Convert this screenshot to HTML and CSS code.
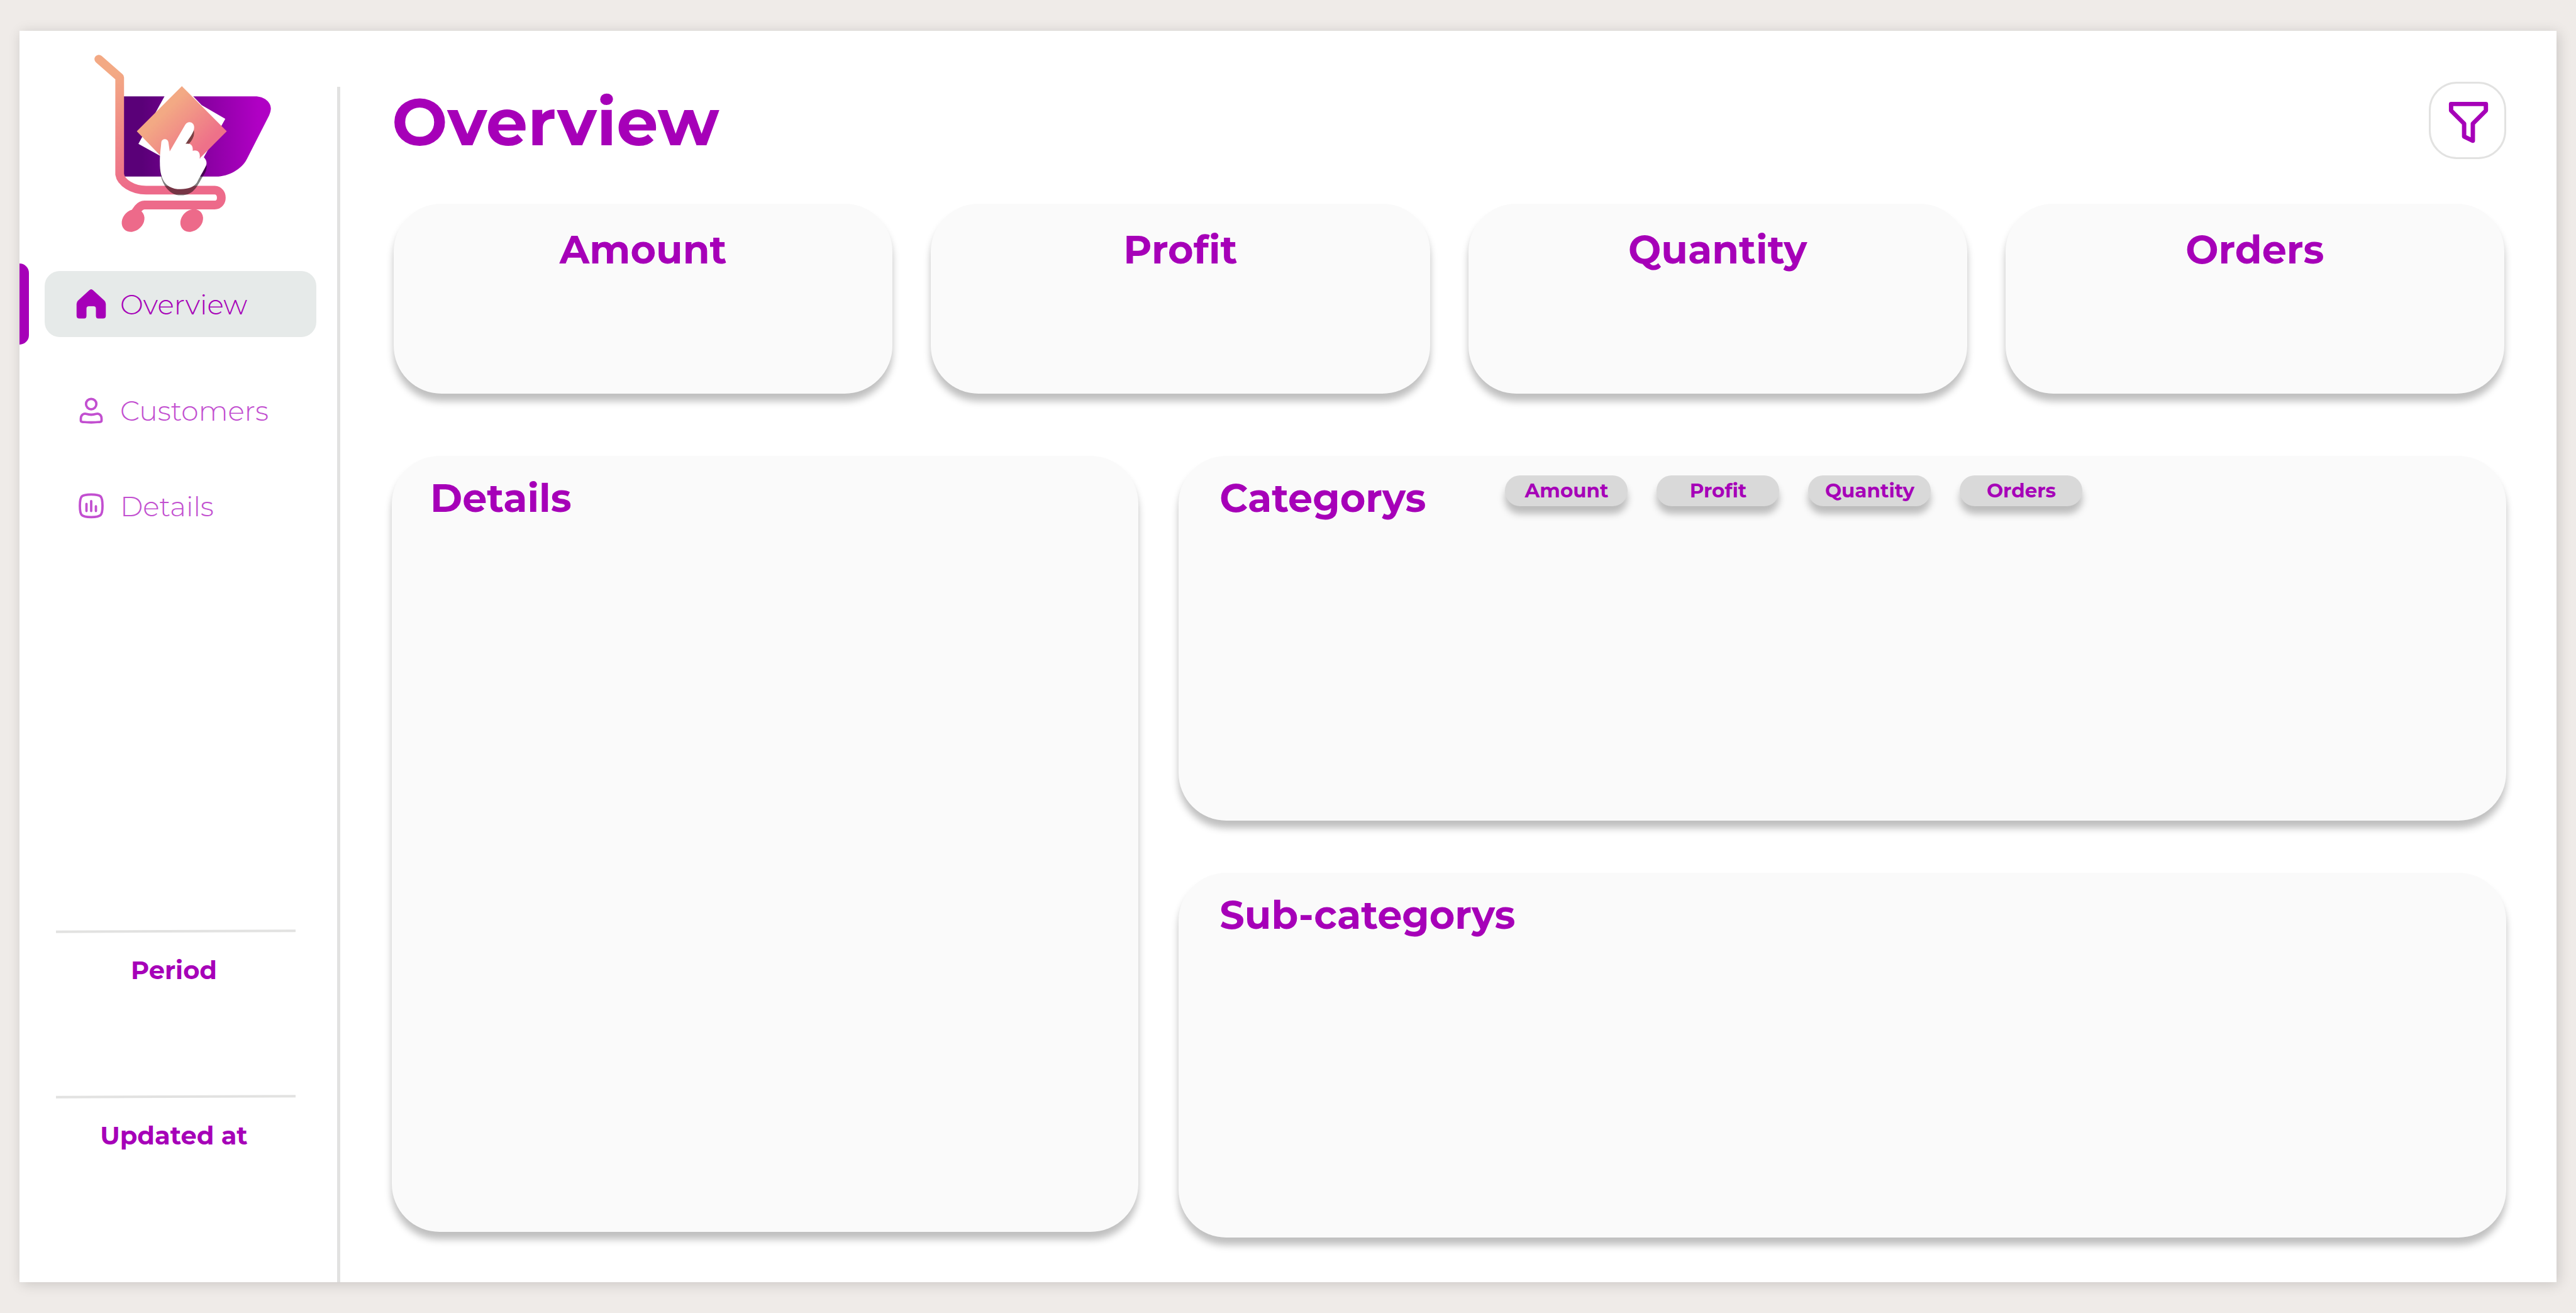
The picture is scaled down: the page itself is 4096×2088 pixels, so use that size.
FILE: index.html
```html
<!DOCTYPE html>
<html lang="en">
<head>
<meta charset="utf-8">
<meta name="viewport" content="width=device-width, initial-scale=1">
<title>Overview</title>
<link rel="stylesheet" href="styles.css">
</head>
<body>
<div class="frame">
  <aside class="sidebar">
    <svg class="logo" viewBox="0 0 1320 1260" role="img" aria-label="Shop">
      <defs>
        <linearGradient id="basket" gradientUnits="userSpaceOnUse" x1="400" y1="0" x2="1120" y2="0">
          <stop offset="0" stop-color="#5a0078"/>
          <stop offset="1" stop-color="#b000c4"/>
        </linearGradient>
        <linearGradient id="rail" gradientUnits="userSpaceOnUse" x1="200" y1="190" x2="400" y2="900">
          <stop offset="0" stop-color="#f3a984"/>
          <stop offset="1" stop-color="#ed6a8a"/>
        </linearGradient>
        <linearGradient id="tile" gradientUnits="userSpaceOnUse" x1="530" y1="430" x2="760" y2="660">
          <stop offset="0" stop-color="#f3a984"/>
          <stop offset="1" stop-color="#ee7189"/>
        </linearGradient>
      </defs>
      <path fill="url(#basket)" d="M286 327H1100C1160 327 1200 365 1198 405Q1196 430 1180 460L1050 715C1020 775 940 824 860 824H286Z"/>
      <path fill="#fff" d="M541 324L715 324L770 382L916 466L780 710L510 694L378 621Z"/>
      <path fill="none" stroke="url(#rail)" stroke-width="54" stroke-linecap="round" stroke-linejoin="round" d="M133 97L262 210V810C270 860 340 908 425 908H850C905 910 905 1000 850 1000H415C385 1000 365 1035 352 1060"/>
      <ellipse cx="345" cy="1096" rx="63" ry="77" transform="rotate(45 345 1096)" fill="#ed6a8a"/>
      <ellipse cx="708" cy="1096" rx="63" ry="77" transform="rotate(45 708 1096)" fill="#ed6a8a"/>
      <path fill="url(#tile)" d="M647 264L925 543L755 714L510 690L368 543Z"/>
      <path fill="#000" fill-opacity=".5" d="M720 535Q728 560 714 588Q700 616 684 624L664 622ZM511 760C511 870 570 940 640 940C730 940 745 870 785 810Q802 785 800 756Z"/>
      <path fill="#fff" d="M511 740C509 690 517 650 520 610C524 586 560 586 564 612L572 668L668 502C686 474 726 486 723 522C722 550 700 575 670 622C700 616 718 630 714 664C744 656 764 672 757 712L778 700C796 714 806 736 796 758C775 800 757 828 740 862C722 888 685 902 640 902C585 902 545 880 528 838C514 806 511 775 511 740Z"/>
    </svg>

    <nav class="nav" aria-label="Main">
      <a class="nav-item is-active" href="#overview" aria-current="page">
        <svg class="nav-icon" viewBox="0 0 64 64" aria-hidden="true"><path fill="currentColor" d="M28 2Q32 -2 36 2L60 24Q63 27 63 31V56Q63 62 57 62H47Q42 62 42 56V41Q42 36 37 36H27Q22 36 22 41V56Q22 62 17 62H7Q1 62 1 56V31Q1 27 4 24Z"/></svg>
        <span>Overview</span>
      </a>
      <a class="nav-item" href="#customers">
        <svg class="nav-icon" viewBox="0 0 64 64" fill="none" stroke="currentColor" stroke-width="5" stroke-linejoin="round" aria-hidden="true"><circle cx="32" cy="18" r="11"/><path d="M10 53V49C10 41 16 37 22 39C28 41 36 41 42 39C48 37 54 41 54 49V53Q54 56 50 56Q32 58 14 56Q10 56 10 53Z"/></svg>
        <span>Customers</span>
      </a>
      <a class="nav-item" href="#details">
        <svg class="nav-icon" viewBox="0 0 64 64" fill="none" stroke="currentColor" stroke-width="5" stroke-linecap="round" aria-hidden="true"><path d="M8 31C8 10 11 7 32 7S56 10 56 31S53 55 32 55S8 52 8 31Z"/><path d="M22 27V42M32 21V42M42 32V42"/></svg>
        <span>Details</span>
      </a>
    </nav>

    <div class="meta">
      <section class="meta-block"><h2 class="meta-title">Period</h2></section>
      <section class="meta-block"><h2 class="meta-title">Updated at</h2></section>
    </div>
  </aside>

  <div class="divider"></div>

  <main class="main">
    <header class="header">
      <h1 class="title">Overview</h1>
      <button class="filter" type="button" aria-label="Filter">
        <svg class="filter-icon" viewBox="0 0 480 480" fill="none" stroke="currentColor" stroke-width="27" stroke-linejoin="round" aria-hidden="true"><path d="M138 138H354V179L273 260V366L219 340V260L138 179Z"/></svg>
      </button>
    </header>

    <div class="stats">
      <section class="card stat"><h2 class="card-title">Amount</h2></section>
      <section class="card stat"><h2 class="card-title">Profit</h2></section>
      <section class="card stat"><h2 class="card-title">Quantity</h2></section>
      <section class="card stat"><h2 class="card-title">Orders</h2></section>
    </div>

    <div class="panels">
      <section class="card panel panel-details"><h2 class="card-title">Details</h2></section>
      <div class="panel-stack">
        <section class="card panel">
          <h2 class="card-title">Categorys</h2>
          <div class="tabs">
            <button class="tab" type="button">Amount</button>
            <button class="tab" type="button">Profit</button>
            <button class="tab" type="button">Quantity</button>
            <button class="tab" type="button">Orders</button>
          </div>
        </section>
        <section class="card panel"><h2 class="card-title">Sub-categorys</h2></section>
      </div>
    </div>
  </main>
</div>
</body>
</html>
```
FILE: styles.css
```css
:root {
  --accent: #a600b8;
  --accent-soft: #c24fd0;
  --line: #e2e2e1;
  --surface: #fafafa;
  --shadow: 0 12px 12px rgba(0, 0, 0, 0.25);
}

* {
  box-sizing: border-box;
}

body {
  display: flex;
  min-height: 100vh;
  margin: 0;
  padding: 49px 31px;
  background: #efebe8;
  color: var(--accent);
  font-family: "Montserrat", "DejaVu Sans", sans-serif;
}

h1,
h2 {
  margin: 0;
  font-weight: 700;
}

.frame {
  display: grid;
  flex: 1;
  grid-template-columns: 505px 5px 1fr;
  background: #fff;
  box-shadow: 3px 3px 20px rgba(0, 0, 0, 0.16);
}

/* Sidebar */
.sidebar {
  display: flex;
  flex-direction: column;
  padding-top: 20px;
}

.logo {
  width: 339px;
  height: 324px;
  margin-left: 92px;
}

.nav {
  display: flex;
  flex-direction: column;
  gap: 47px;
  padding: 38px 33px 0 40px;
}

.nav-item {
  display: flex;
  position: relative;
  align-items: center;
  gap: 22px;
  height: 105px;
  padding-left: 50px;
  border-radius: 24px;
  color: var(--accent-soft);
  font-size: 44px;
  font-weight: 300;
  text-decoration: none;
}

.nav-item.is-active {
  margin-bottom: 17px;
  background: #e6eae9;
  color: var(--accent);
}

.nav-item.is-active::before {
  position: absolute;
  top: -12px;
  bottom: -12px;
  left: -40px;
  width: 15px;
  border-radius: 0 16px 16px 0;
  background: var(--accent);
  content: "";
}

.nav-icon {
  width: 48px;
  height: 48px;
}

.divider {
  margin-top: 89px;
  background: var(--line);
}

.meta {
  margin: auto 66px 0 58px;
}

.meta-block {
  height: 263px;
  text-align: center;
}

.meta-block:last-child {
  height: 297px;
}

.meta-block::before {
  display: block;
  height: 4px;
  margin-bottom: 36px;
  background: var(--line);
  transform: rotate(-0.25deg);
  content: "";
}

.meta-title {
  padding-right: 6px;
  font-size: 40px;
  line-height: 48px;
}

/* Main */
.main {
  display: flex;
  flex-direction: column;
  padding: 81px 80px 71px 82px;
}

.header {
  display: flex;
  align-items: center;
  justify-content: space-between;
  margin-bottom: 71px;
}

.title {
  padding-top: 4px;
  font-size: 105px;
  line-height: 119px;
}

.filter {
  width: 123px;
  height: 123px;
  padding: 0;
  border: 3px solid var(--line);
  border-radius: 45px;
  background: #fff;
  color: var(--accent);
}

.filter-icon {
  display: block;
  width: 123px;
  height: 123px;
  margin: -3px;
}

.card {
  border-radius: 76px;
  background: var(--surface);
  box-shadow: var(--shadow);
}

.card-title {
  font-size: 62px;
  line-height: 72px;
}

.stats {
  display: grid;
  grid-template-columns: repeat(4, 1fr);
  gap: 61px;
  margin-bottom: 99px;
  padding: 0 3px;
}

.stat {
  height: 302px;
  padding-top: 37px;
  text-align: center;
}

.panels {
  display: grid;
  flex: 1;
  grid-template-columns: 9fr 16fr;
  gap: 64px;
}

.panel {
  display: flex;
  align-items: flex-start;
  padding: 31px 65px;
}

.panel-details {
  margin-bottom: 9px;
  padding-left: 61px;
}

.panel-stack {
  display: grid;
  grid-template-rows: 1fr 1fr;
  gap: 83px;
}

.tabs {
  display: flex;
  gap: 46px;
  margin-left: 126px;
}

.tab {
  width: 195px;
  height: 49px;
  padding: 0;
  border: 0;
  border-radius: 24px;
  background: #d9d9d9;
  box-shadow: var(--shadow);
  color: var(--accent);
  font-family: inherit;
  font-size: 31px;
  font-weight: 700;
  line-height: 49px;
}
```
